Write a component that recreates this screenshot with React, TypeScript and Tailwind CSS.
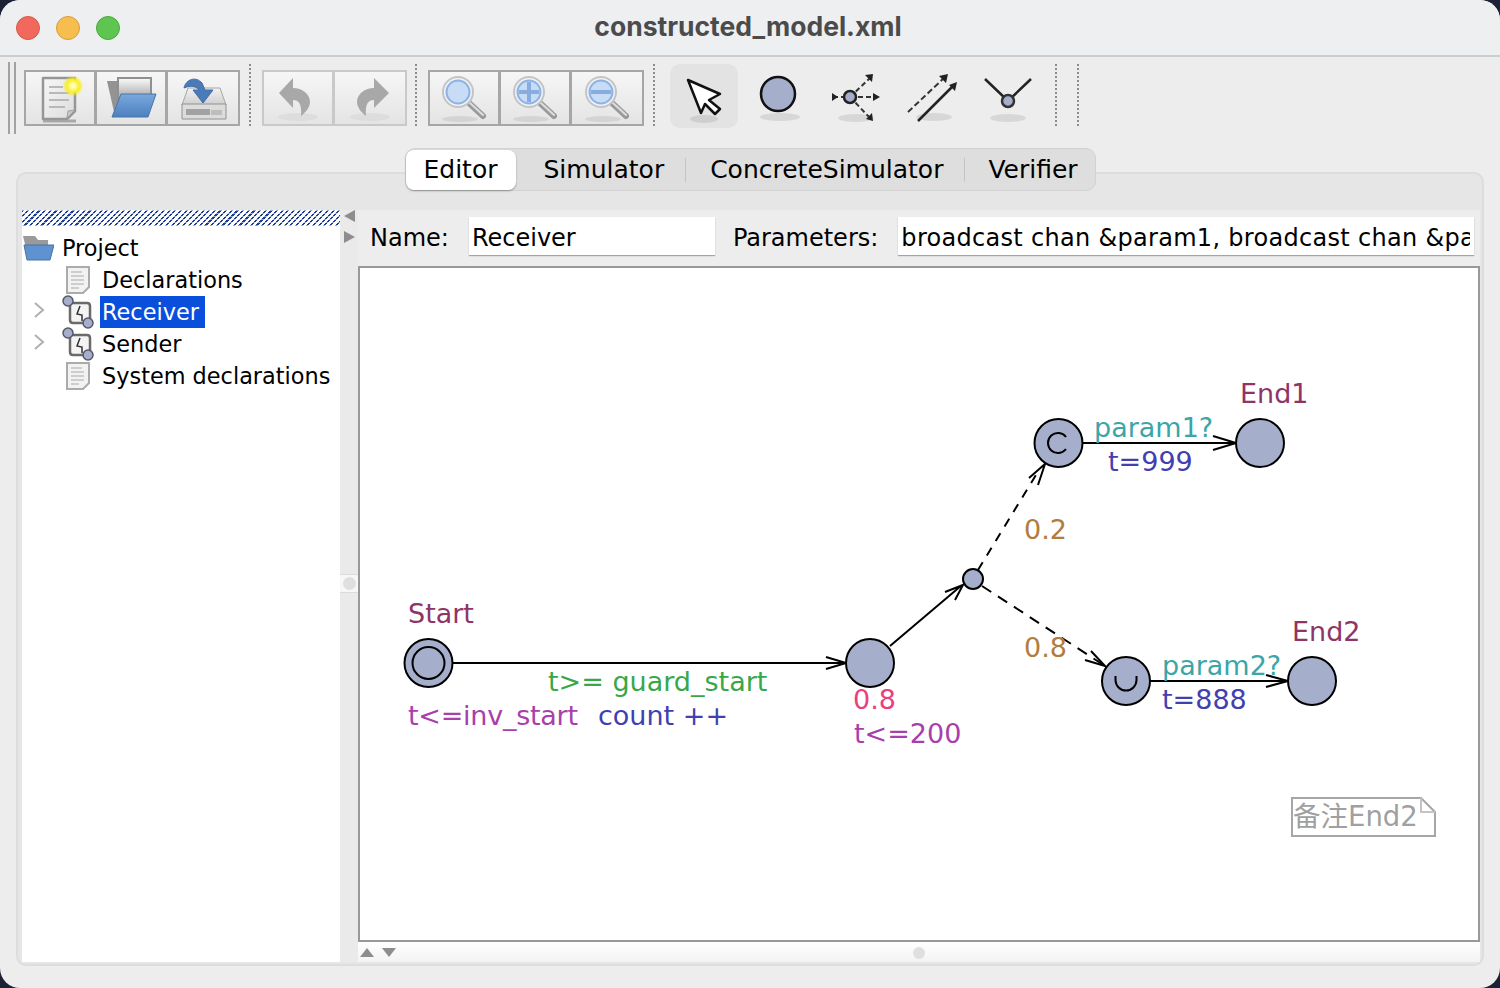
import React from "react";

const uiFont = "font-['DejaVu_Sans',sans-serif]";

function Shadow({ cx, cy, rx }: { cx: number; cy: number; rx: number }) {
  return <ellipse cx={cx} cy={cy} rx={rx} ry={4} fill="#000" opacity={0.09} />;
}

function NewIcon() {
  return (
    <svg width="68" height="52" viewBox="0 0 68 52">
      <defs>
        <radialGradient id="glow">
          <stop offset="0.15" stopColor="#fffcc0" />
          <stop offset="0.6" stopColor="#f8f020" />
          <stop offset="1" stopColor="#f6ee10" stopOpacity="0" />
        </radialGradient>
        <linearGradient id="sheet" x1="0" y1="0" x2="1" y2="1">
          <stop offset="0" stopColor="#f7f7f7" />
          <stop offset="1" stopColor="#dcdcdc" />
        </linearGradient>
      </defs>
      <path d="M17 49h33" stroke="#a8a8a8" strokeWidth="3" />
      <path d="M17 6h32v33l-8 8H17z" fill="url(#sheet)" stroke="#969696" strokeWidth="2.5" strokeLinejoin="round" />
      <path d="M41 46l1-7 7-1z" fill="#c8c8c8" stroke="#a0a0a0" />
      <path d="M23 15h14M23 21h20M23 28h20M23 35h16" stroke="#b8b8b8" strokeWidth="2" />
      <circle cx="47" cy="14" r="10.5" fill="url(#glow)" />
    </svg>
  );
}

function OpenIcon() {
  return (
    <svg width="68" height="52" viewBox="0 0 68 52">
      <defs>
        <linearGradient id="folderBlue" x1="0" y1="0" x2="0" y2="1">
          <stop offset="0" stopColor="#7aa8de" />
          <stop offset="1" stopColor="#4c80bf" />
        </linearGradient>
        <linearGradient id="paper" x1="0" y1="0" x2="0" y2="1">
          <stop offset="0" stopColor="#fbfbfb" />
          <stop offset="1" stopColor="#a8a8a8" />
        </linearGradient>
      </defs>
      <path d="M10 9h12l2 35h-6z" fill="#939393" />
      <path d="M21 6h33v20H21z" fill="url(#paper)" stroke="#8f8f8f" strokeWidth="2" />
      <path d="M24 22h35l-8 23H15z" fill="url(#folderBlue)" stroke="#4a74a6" />
    </svg>
  );
}

function SaveIcon() {
  return (
    <svg width="68" height="52" viewBox="0 0 68 52">
      <defs>
        <linearGradient id="drive" x1="0" y1="0" x2="0" y2="1">
          <stop offset="0" stopColor="#f2f2f2" />
          <stop offset="1" stopColor="#cfcfcf" />
        </linearGradient>
      </defs>
      <path d="M19 16h32l6 17H13z" fill="url(#drive)" stroke="#a6a6a6" />
      <path d="M13 32h44v15H13z" fill="#dcdcdc" stroke="#929292" />
      <path d="M17 37h24v6H17z" fill="#a2a2a2" />
      <path d="M42 38h11v5H42z" fill="#bdbdbd" />
      <path d="M15 16c2-9 12-12 18-5l3 7h8L34 31 24 18h6c-3-4-8-5-15-2z" fill="#4a7ab8" stroke="#3d6ca8" />
    </svg>
  );
}

function UndoIcon({ flip }: { flip?: boolean }) {
  return (
    <svg width="68" height="52" viewBox="0 0 68 52">
      <ellipse cx="34" cy="45" rx="20" ry="4" fill="#000" opacity={0.04} />
      <path
        d={flip ? "M38 6l15 15-15 15v-8c-6 0-9 4-8 16-5-4-9-9-9-14 0-8 8-14 17-14z" : "M29 6L15 21l14 15v-8c6 0 9 4 8 16 5-4 9-9 9-14 0-8-8-14-17-14z"}
        fill="#a8a8a8"
      />
    </svg>
  );
}

function ZoomIcon({ mark }: { mark?: "plus" | "minus" }) {
  return (
    <svg width="68" height="52" viewBox="0 0 68 52">
      <ellipse cx="30" cy="47" rx="18" ry="3" fill="#000" opacity={0.08} />
      <path d="M39 31l14 13" stroke="#9a9a9a" strokeWidth="6" strokeLinecap="round" />
      <path d="M40 31l13 12" stroke="#dedede" strokeWidth="2" strokeLinecap="round" />
      <circle cx="28" cy="20" r="15" fill="#eef3fa" stroke="#c4c4c4" strokeWidth="2" />
      <circle cx="28" cy="20" r="11.5" fill="#c9dcf5" stroke="#8fb2e2" strokeWidth="2" />
      {mark && <path d="M18 20h20" stroke="#86ace0" strokeWidth="4" />}
      {mark === "plus" && <path d="M28 10v20" stroke="#86ace0" strokeWidth="4" />}
    </svg>
  );
}

function PointerIcon() {
  return (
    <svg width="68" height="64" viewBox="0 0 68 64">
      <Shadow cx={34} cy={55} rx={14} />
      <path d="M18 16L50 30 39 36 50 45 45 50 35 40 31 49z" fill="#fff" stroke="#111" strokeWidth="2.5" strokeLinejoin="round" />
    </svg>
  );
}

function LocationIcon() {
  return (
    <svg width="68" height="64" viewBox="0 0 68 64">
      <Shadow cx={34} cy={53} rx={20} />
      <circle cx="32" cy="30" r="17" fill="#a5aecb" stroke="#111" strokeWidth="2.5" />
    </svg>
  );
}

function BranchIcon() {
  return (
    <svg width="68" height="64" viewBox="0 0 68 64">
      <Shadow cx={34} cy={54} rx={18} />
      <path d="M28 33l20-19M28 33h28M28 33l20 21M11 33h17" stroke="#333" strokeWidth="2" strokeDasharray="5 3" fill="none" />
      <path d="M43 11l8-1-1 8zM51 29l7 4-7 4zM44 55l7 2-1-8zM10 29l6 4-6 4z" fill="#222" />
      <circle cx="28" cy="33" r="6" fill="#a5aecb" stroke="#222" strokeWidth="2.5" />
    </svg>
  );
}

function EdgeIcon() {
  return (
    <svg width="68" height="64" viewBox="0 0 68 64">
      <Shadow cx={36} cy={53} rx={18} />
      <path d="M10 48l36-34" stroke="#333" strokeWidth="2" strokeDasharray="6 3" />
      <path d="M20 57l36-36" stroke="#222" strokeWidth="2.500" />
      <path d="M41 12l9-2-2 9zM51 21l8-3-2 9z" fill="#222" />
    </svg>
  );
}

function NailIcon() {
  return (
    <svg width="68" height="64" viewBox="0 0 68 64">
      <Shadow cx={34} cy={54} rx={18} />
      <path d="M11 15l23 22 23-22" stroke="#222" strokeWidth="2.5" fill="none" />
      <circle cx="34" cy="37" r="6" fill="#a5aecb" stroke="#333" strokeWidth="2.5" />
    </svg>
  );
}

function DocIcon() {
  return (
    <svg width="26" height="28" viewBox="0 0 26 28">
      <path d="M2 1h22v20l-6 6H2z" fill="#f2f2f2" stroke="#ababab" strokeWidth="2" />
      <path d="M6 6h11M6 10h13M6 14h13M6 18h13M6 22h8" stroke="#c2c2c2" strokeWidth="1.5" />
    </svg>
  );
}

function FolderIcon() {
  return (
    <svg width="32" height="26" viewBox="0 0 32 26">
      <path d="M1 1h12l3 4h10v8H4z" fill="#9a9a9a" />
      <path d="M2 10h30l-4 15H5z" fill="#5f92d0" stroke="#47729f" />
    </svg>
  );
}

function TemplateIcon() {
  return (
    <svg width="34" height="34" viewBox="0 0 34 34">
      <path d="M9 8h17q3 0 3 3v17H12q-3 0-3-3z" fill="#f4f4f4" stroke="#6a6a6a" strokeWidth="2.5" />
      <path d="M19 11l-3 8 5 1v6" fill="none" stroke="#333" strokeWidth="1.5" />
      <circle cx="7" cy="6" r="5" fill="#a5aecb" stroke="#55586a" strokeWidth="1.5" />
      <circle cx="27" cy="28" r="5" fill="#a5aecb" stroke="#55586a" strokeWidth="1.5" />
    </svg>
  );
}

function Chevron() {
  return (
    <svg width="12" height="18" viewBox="0 0 12 18">
      <path d="M2 2l8 7-8 7" fill="none" stroke="#b0b0b0" strokeWidth="2" />
    </svg>
  );
}

function Cell({ children, last }: { children: React.ReactNode; last?: boolean }) {
  return (
    <div className={`flex items-center justify-center bg-gradient-to-b from-[#f6f6f6] to-[#e4e4e4] ${last ? "w-[70px]" : "w-[71px] border-r-[3px] border-inherit"}`}>
      {children}
    </div>
  );
}

function Dots() {
  return <div className="mb-[6px] h-[62px] w-0 border-l-2 border-dotted border-[#8c8c8c]" />;
}

function Tool({ children, active }: { children: React.ReactNode; active?: boolean }) {
  return <div className={`flex h-[64px] w-[68px] items-center justify-center ${active ? "rounded-[10px] bg-[#e3e3e3]" : ""}`}>{children}</div>;
}

function TreeRow({ icon, label, chevron, selected }: { icon: React.ReactNode; label: string; chevron?: boolean; selected?: boolean }) {
  return (
    <div className="flex h-[32px] items-center whitespace-nowrap">
      <div className="mb-[4px] flex w-[30px] justify-start pl-[11px]">{chevron && <Chevron />}</div>
      <div className="w-[48px]">{icon}</div>
      <div className={`flex h-[32px] items-center pl-[2px] pr-[6px] pt-[2px] ${selected ? "bg-[#0a4fdc] text-white" : ""}`}>{label}</div>
    </div>
  );
}

function DiagramLabel({ className, children }: { className: string; children: React.ReactNode }) {
  return <span className={`absolute whitespace-nowrap leading-none ${className}`}>{children}</span>;
}

export default function App() {
  return (
    <div className={`h-[988px] w-[1500px] overflow-hidden bg-[#1b2236] ${uiFont} text-[24px] text-black`}>
      <div className="flex h-full flex-col rounded-[20px] bg-[#ededed]">
        <div className="relative flex h-[57px] shrink-0 items-center justify-center rounded-t-[20px] border-b-2 border-[#cdcdcd] bg-[#eeeff1] pb-[2px]">
          <div className="absolute left-[16px] top-[16px] flex gap-[16px]">
            <div className="h-[24px] w-[24px] rounded-full border border-[#d9574c] bg-[#f0695c]" />
            <div className="h-[24px] w-[24px] rounded-full border border-[#d99c3a] bg-[#f6bd4f]" />
            <div className="h-[24px] w-[24px] rounded-full border border-[#4ca83f] bg-[#5dc550]" />
          </div>
          <span className="-ml-[4px] font-['Inter',sans-serif] text-[26.5px] font-bold text-[#4b4b4b]">constructed_model.xml</span>
        </div>

        <div className="flex h-[82px] shrink-0 items-center pl-[8px]">
          <div className="mr-[8px] h-[72px] w-[8px] border-x-2 border-[#a2a2a2]" />
          <div className="flex h-[56px] border-2 border-[#a6a6a6]">
            <Cell><NewIcon /></Cell>
            <Cell><OpenIcon /></Cell>
            <Cell last><SaveIcon /></Cell>
          </div>
          <div className="ml-[9px] mr-[11px]"><Dots /></div>
          <div className="flex h-[56px] border-2 border-[#c9c9c9]">
            <Cell><UndoIcon /></Cell>
            <Cell last><UndoIcon flip /></Cell>
          </div>
          <div className="ml-[8px] mr-[11px]"><Dots /></div>
          <div className="flex h-[56px] border-2 border-[#a6a6a6]">
            <Cell><ZoomIcon /></Cell>
            <Cell><ZoomIcon mark="plus" /></Cell>
            <Cell last><ZoomIcon mark="minus" /></Cell>
          </div>
          <div className="ml-[9px] mr-[15px]"><Dots /></div>
          <div className="mb-[4px] flex gap-[8px]">
            <Tool active><PointerIcon /></Tool>
            <Tool><LocationIcon /></Tool>
            <Tool><BranchIcon /></Tool>
            <Tool><EdgeIcon /></Tool>
            <Tool><NailIcon /></Tool>
          </div>
          <div className="ml-[13px] mr-[20px]"><Dots /></div>
          <Dots />
        </div>

        <div className="relative z-10 mt-[9px] flex shrink-0 justify-center">
          <div className="flex h-[43px] w-[691px] items-center rounded-[10px] border border-[#d2d2d2] bg-[#dedede] text-[25px]">
            <div className="flex h-[40px] w-[110px] items-center justify-center rounded-[8px] bg-white shadow-[0_1px_2px_rgba(0,0,0,0.35)]">Editor</div>
            <span className="ml-[28px]">Simulator</span>
            <div className="ml-[21px] h-[24px] w-px bg-[#c4c4c4]" />
            <span className="ml-[24px]">ConcreteSimulator</span>
            <div className="ml-[21px] h-[24px] w-px bg-[#c4c4c4]" />
            <span className="ml-[23px]">Verifier</span>
          </div>
        </div>

        <div className="mx-[16px] -mt-[19px] flex h-[794px] rounded-[10px] border-2 border-[#dddddd] bg-[#e6e6e6] pb-[2px] pl-[4px] pr-[2px] pt-[36px]">
          <div className="flex w-[318px] shrink-0 flex-col bg-white text-[22.4px]">
            <div className="h-[16px] shrink-0 bg-[repeating-linear-gradient(0deg,rgba(255,255,255,0.55)_0,rgba(255,255,255,0.55)_1px,transparent_1px,transparent_3px),repeating-linear-gradient(135deg,#1a3c96_0,#1a3c96_1.5px,#ffffff_1.5px,#ffffff_4px)]" />
            <div className="mt-[6px] flex h-[32px] items-center">
              <FolderIcon />
              <span className="ml-[8px] pt-[2px]">Project</span>
            </div>
            <TreeRow icon={<div className="ml-[13px]"><DocIcon /></div>} label="Declarations" />
            <TreeRow icon={<div className="ml-[9px]"><TemplateIcon /></div>} label="Receiver" chevron selected />
            <TreeRow icon={<div className="ml-[9px]"><TemplateIcon /></div>} label="Sender" chevron />
            <TreeRow icon={<div className="ml-[13px]"><DocIcon /></div>} label="System declarations" />
          </div>

          <div className="relative flex w-[18px] shrink-0 flex-col items-center bg-[#eaeaea]">
            <div className="h-0 w-0 border-y-[6px] border-r-[11px] border-y-transparent border-r-[#8d8d8d]" />
            <div className="mt-[9px] h-0 w-0 border-y-[6px] border-l-[11px] border-y-transparent border-l-[#8d8d8d]" />
            <div className="absolute left-0 top-[364px] flex h-[19px] w-[18px] items-center justify-center border-y border-[#dcdcdc] bg-[#f7f7f7]">
              <div className="h-[13px] w-[13px] rounded-full bg-[#dfdfdf]" />
            </div>
          </div>

          <div className="flex min-w-0 flex-1 flex-col bg-[#ededed]">
            <div className="flex h-[56px] shrink-0 items-center pb-[4px]">
              <span className="ml-[12px] pt-[4px]">Name:</span>
              <div className="ml-[20px] flex h-[38px] w-[246px] items-center overflow-hidden bg-white pl-[3px] pt-[4px] shadow-[0_1px_1px_rgba(0,0,0,0.3)]">Receiver</div>
              <span className="ml-[18px] pt-[4px]">Parameters:</span>
              <div className="ml-[20px] flex h-[38px] w-[576px] items-center overflow-hidden whitespace-nowrap bg-white pl-[3px] pr-[4px] pt-[4px] shadow-[0_1px_1px_rgba(0,0,0,0.3)]">
                <div className="w-full overflow-hidden tracking-[0.3px]">broadcast chan &amp;param1, broadcast chan &amp;param2</div>
              </div>
            </div>

            <div className="relative h-[676px] shrink-0 border-2 border-[#999999] bg-white text-[27px]">
              <svg className="absolute left-0 top-0" width="1118" height="672" viewBox="360 268 1118 672">
                <g fill="none" stroke="#000" strokeWidth="2">
                  <path d="M452 663H846M826 657l20 6-20 6" />
                  <path d="M890 646l72-61M945 592l18-7-8 15" />
                  <path d="M978 570l61-100" strokeDasharray="9 8" />
                  <path d="M1029 478l16-14-7 21" />
                  <path d="M982 586l120 78" strokeDasharray="11 8" />
                  <path d="M1091 651l14 15-20-6" />
                  <path d="M1082 443h154M1213 436l23 7-23 7" />
                  <path d="M1150 681h138M1266 675l22 6-22 6" />
                </g>
                <g fill="#a5aecb" stroke="#000" strokeWidth="2">
                  <circle cx="428.5" cy="663" r="24" />
                  <circle cx="428.5" cy="663" r="16" />
                  <circle cx="870" cy="663" r="24" />
                  <circle cx="973" cy="579" r="10" />
                  <circle cx="1058.5" cy="443" r="24" />
                  <circle cx="1260" cy="443" r="24" />
                  <circle cx="1126" cy="681" r="24" />
                  <circle cx="1312" cy="681" r="24" />
                </g>
                <path d="M1066 437a10 10 0 1 0 0 12" fill="none" stroke="#000" strokeWidth="2" />
                <path d="M1115.500 676v4a10.500 10.500 0 0 0 21 0v-4" fill="none" stroke="#000" strokeWidth="2" />
              </svg>
              <DiagramLabel className="left-[48px] top-[332px] text-[#8e3566]">Start</DiagramLabel>
              <DiagramLabel className="left-[188px] top-[400px] text-[#37a84a]">t&gt;= guard_start</DiagramLabel>
              <DiagramLabel className="left-[48px] top-[434px] tracking-[-0.25px] text-[#a83fac]">t&lt;=inv_start</DiagramLabel>
              <DiagramLabel className="left-[238px] top-[434px] text-[#4240b0]">count ++</DiagramLabel>
              <DiagramLabel className="left-[493px] top-[418px] text-[#ee3d7f]">0.8</DiagramLabel>
              <DiagramLabel className="left-[494px] top-[452px] text-[#a83fac]">t&lt;=200</DiagramLabel>
              <DiagramLabel className="left-[880px] top-[112px] text-[#8e3566]">End1</DiagramLabel>
              <DiagramLabel className="left-[734px] top-[146px] text-[#3ba5a8]">param1?</DiagramLabel>
              <DiagramLabel className="left-[748px] top-[180px] text-[#4240b0]">t=999</DiagramLabel>
              <DiagramLabel className="left-[664px] top-[248px] text-[#b07d3e]">0.2</DiagramLabel>
              <DiagramLabel className="left-[664px] top-[366px] text-[#b07d3e]">0.8</DiagramLabel>
              <DiagramLabel className="left-[932px] top-[350px] text-[#8e3566]">End2</DiagramLabel>
              <DiagramLabel className="left-[802px] top-[384px] text-[#3ba5a8]">param2?</DiagramLabel>
              <DiagramLabel className="left-[802px] top-[418px] text-[#4240b0]">t=888</DiagramLabel>
              <div className="absolute left-[931px] top-[529px] flex h-[40px] w-[145px] items-center pl-[2px] font-['DejaVu_Sans','Noto_Sans_CJK_SC',sans-serif] text-[27.5px] text-[#a0a0a0]">
                备注End2
                <svg className="absolute left-0 top-0" width="145" height="40" viewBox="0 0 145 40">
                  <path d="M1 1h129l14 14v24H1z" fill="none" stroke="#a6a6a6" strokeWidth="2" />
                  <path d="M130 1v14h14" fill="none" stroke="#c4c4c4" strokeWidth="2" />
                </svg>
              </div>
            </div>

            <div className="relative flex h-[20px] shrink-0 items-center gap-[8px] bg-gradient-to-b from-[#ffffff] to-[#f3f3f3] pl-[2px]">
              <div className="h-0 w-0 border-x-[7px] border-b-[9px] border-x-transparent border-b-[#8d8d8d]" />
              <div className="h-0 w-0 border-x-[7px] border-t-[9px] border-x-transparent border-t-[#8d8d8d]" />
              <div className="absolute left-[555px] top-[5px] h-[12px] w-[12px] rounded-full bg-[#dfdfdf]" />
            </div>
          </div>
        </div>
      </div>
    </div>
  );
}
